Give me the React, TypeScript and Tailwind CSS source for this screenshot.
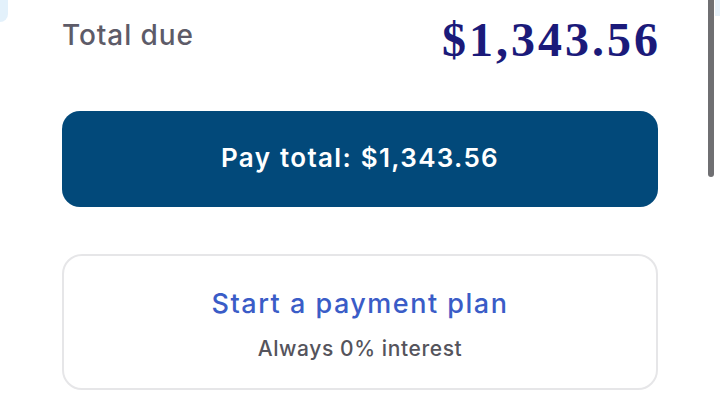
import React from "react";

export default function App() {
  const sans = { fontFamily: "Inter, 'Noto Sans', sans-serif" };
  return (
    <div className="relative w-[720px] h-[405px] overflow-hidden bg-white" style={sans}>
      <div className="absolute left-0 top-0 w-[8px] h-[22px] rounded-br-[8px] bg-[#e3f1fb]" />
      <div className="absolute right-0 top-0 w-[5px] h-[16px] bg-[#e6f1fa]" />
      <div className="absolute left-[708px] top-0 w-[6px] h-[177px] rounded-b-full bg-[#6f6f72]" />
      <div className="flex flex-col px-[62px] pr-[62px]">
        <div className="flex justify-between items-start pt-[14px]">
          <div className="text-[28px] leading-[32px] font-medium text-[#5d5b68] pt-[5px] tracking-[0.9px]">Total due</div>
          <div
            className="text-[48px] leading-[52px] font-bold text-[#1b1a7a] tracking-[3px] -mr-[3px]"
            style={{ fontFamily: "'Liberation Serif', serif" }}
          >
            $1,343.56
          </div>
        </div>
        <div className="mt-[45px] h-[96px] rounded-[18px] bg-[#02497a] flex items-center justify-center">
          <span className="text-[26px] font-semibold text-white tracking-[1.3px] [word-spacing:1px] pb-[3px]">Pay total: $1,343.56</span>
        </div>
        <div className="mt-[47px] h-[136px] rounded-[20px] border-2 border-[#e6e6e8] flex flex-col items-center pt-[31px]">
          <span className="text-[27px] leading-[34px] font-medium text-[#3a5cc7] tracking-[1.5px] [word-spacing:0px]">Start a payment plan</span>
          <span className="mt-[15px] text-[21px] leading-[26px] font-medium text-[#55545c] tracking-[0.6px]">Always 0% interest</span>
        </div>
      </div>
    </div>
  );
}
